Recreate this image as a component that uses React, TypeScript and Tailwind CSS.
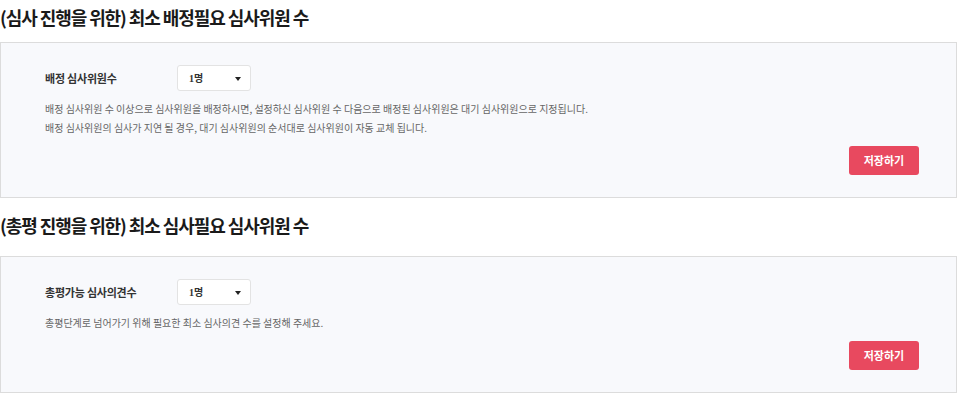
const font = { fontFamily: '"Noto Sans CJK KR", "Noto Sans", sans-serif' }

function Select() {
  return (
    <div className="flex h-[26px] w-[74px] items-center justify-between rounded-[3px] border border-[#e3e3e3] bg-white pl-[11px] pr-[9px]">
      <span className="text-[10px] font-bold text-[#333]" style={{ fontFamily: '"Liberation Serif", "Noto Sans CJK KR", serif' }}>
        1명
      </span>
      <span className="mt-[1px] h-0 w-0 border-x-[3.5px] border-t-[4px] border-x-transparent border-t-[#222]" />
    </div>
  )
}

type SectionProps = { title: string; label: string; lines: string[]; titleClass: string; boxClass: string }

function Section({ title, label, lines, titleClass, boxClass }: SectionProps) {
  return (
    <div>
      <div className={`flex items-center text-[18px] font-bold tracking-[-0.06em] text-[#1a1a1a] ${titleClass}`}>{title}</div>
      <div className={`border border-[#dcdcdc] bg-[#f8f9fc] pl-[44px] pr-[37px] pt-[22px] ${boxClass}`}>
        <div className="flex items-center">
          <div className="w-[132px] text-[11px] font-bold tracking-[-0.02em] text-[#333]">{label}</div>
          <Select />
        </div>
        <div className="mt-[8px] text-[10px] leading-[19px] text-[#666]">
          {lines.map((l) => (
            <p key={l}>{l}</p>
          ))}
        </div>
        <div className="mt-[9px] flex justify-end">
          <button className="h-[29px] w-[70px] rounded-[3px] bg-[#e8495f] text-[11px] font-bold text-white">
            저장하기
          </button>
        </div>
      </div>
    </div>
  )
}

export default function App() {
  return (
    <div className="h-[395px] w-[957px] overflow-hidden bg-white" style={font}>
      <Section
        title="(심사 진행을 위한) 최소 배정필요 심사위원 수"
        titleClass="h-[42px] pb-[8px]"
        boxClass="pb-[22px]"
        label="배정 심사위원수"
        lines={[
          "배정 심사위원 수 이상으로 심사위원을 배정하시면, 설정하신 심사위원 수 다음으로 배정된 심사위원은 대기 심사위원으로 지정됩니다.",
          "배정 심사위원의 심사가 지연 될 경우, 대기 심사위원의 순서대로 심사위원이 자동 교체 됩니다.",
        ]}
      />
      <Section
        title="(총평 진행을 위한) 최소 심사필요 심사위원 수"
        titleClass="h-[58px] pb-[4px]"
        boxClass="pb-[22px]"
        label="총평가능 심사의견수"
        lines={["총평단계로 넘어가기 위해 필요한 최소 심사의견 수를 설정해 주세요."]}
      />
    </div>
  )
}
